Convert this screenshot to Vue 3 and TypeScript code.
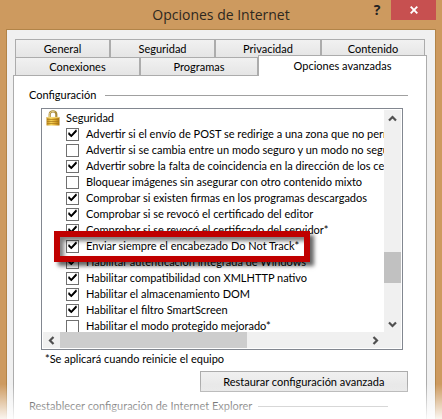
<script setup lang="ts">
import { ref } from 'vue'

interface Option {
  label: string
  checked: boolean
  highlighted?: boolean
}

const topTabs = ['General', 'Seguridad', 'Privacidad', 'Contenido']
const bottomTabs = ['Conexiones', 'Programas', 'Opciones avanzadas']
const active = ref('Opciones avanzadas')

const options = ref<Option[]>([
  { label: 'Advertir si el envío de POST se redirige a una zona que no perm', checked: true },
  { label: 'Advertir si se cambia entre un modo seguro y un modo no segu', checked: false },
  { label: 'Advertir sobre la falta de coincidencia en la dirección de los cert', checked: true },
  { label: 'Bloquear imágenes sin asegurar con otro contenido mixto', checked: false },
  { label: 'Comprobar si existen firmas en los programas descargados', checked: true },
  { label: 'Comprobar si se revocó el certificado del editor', checked: true },
  { label: 'Comprobar si se revocó el certificado del servidor*', checked: true },
  { label: 'Enviar siempre el encabezado Do Not Track*', checked: true, highlighted: true },
  { label: 'Habilitar autenticación integrada de Windows', checked: true },
  { label: 'Habilitar compatibilidad con XMLHTTP nativo', checked: true },
  { label: 'Habilitar el almacenamiento DOM', checked: true },
  { label: 'Habilitar el filtro SmartScreen', checked: true },
  { label: 'Habilitar el modo protegido mejorado*', checked: false },
])
</script>

<template>
  <main class="window">
    <header class="titlebar">
      <h1>Opciones de Internet</h1>
      <div class="window-buttons">
        <button type="button" class="help" aria-label="Ayuda">?</button>
        <button type="button" class="close" aria-label="Cerrar">
          <svg width="8" height="8" viewBox="0 0 8 8"><path d="M0.7 0.7 7.3 7.3M7.3 0.7 0.7 7.3" stroke="#fff" stroke-width="1.9" /></svg>
        </button>
      </div>
    </header>

    <div class="body">
      <nav class="tabs" role="tablist">
        <div class="tab-row top">
          <button v-for="t in topTabs" :key="t" type="button" role="tab" class="tab" :aria-selected="active === t">{{ t }}</button>
        </div>
        <div class="tab-row bottom">
          <button
            v-for="t in bottomTabs"
            :key="t"
            type="button"
            role="tab"
            class="tab"
            :class="{ active: active === t }"
            :aria-selected="active === t"
          >{{ t }}</button>
        </div>
      </nav>

      <section class="panel">
        <h2 class="legend">Configuración</h2>

        <div class="listbox">
          <div class="items">
            <div class="category">
              <svg width="14" height="16" viewBox="0 0 14 16">
                <defs>
                  <linearGradient id="brass" x1="0" x2="1" y1="0" y2="0">
                    <stop offset="0" stop-color="#c08a1c" />
                    <stop offset="0.35" stop-color="#f6d55c" />
                    <stop offset="0.65" stop-color="#e0ac30" />
                    <stop offset="1" stop-color="#a9720c" />
                  </linearGradient>
                </defs>
                <path d="M3.7 8V4.3a3.3 3 0 0 1 6.6 0V8" fill="none" stroke="#a98a3c" stroke-width="2.2" />
                <path d="M3.4 8V4.3a3.5 3.1 0 0 1 5.4-2.4" fill="none" stroke="#e6d38d" stroke-width="0.9" />
                <rect x="0.5" y="7" width="13" height="8.6" rx="0.6" fill="url(#brass)" />
                <path d="M1 9.5h12M1 11.5h12M1 13.5h12" stroke="#a87718" stroke-width="0.7" />
                <path d="M1 7.4h12" stroke="#f8e08a" stroke-width="0.8" />
              </svg>
              <span>Seguridad</span>
            </div>
            <label v-for="o in options" :key="o.label" class="option" :class="{ highlighted: o.highlighted }">
              <input v-model="o.checked" type="checkbox" />
              <svg v-if="o.checked" class="tick" width="13" height="13" viewBox="0 0 13 13"><path d="M3 5.6V7.2L5.3 9.4 10 4.4V2.8" fill="none" stroke="#000" stroke-width="1.3" /><path d="M3 6.4 5.3 8.7 10 3.6" fill="none" stroke="#000" stroke-width="1.6" /></svg>
              <span>{{ o.label }}</span>
            </label>
          </div>

          <div class="scroll vertical">
            <button type="button" aria-label="Subir">
              <svg width="9" height="7" viewBox="0 0 9 7"><path d="M1 5.5 4.5 2 8 5.5" fill="none" stroke="#505050" stroke-width="2.2" /></svg>
            </button>
            <div class="track"><div class="thumb"></div></div>
            <button type="button" aria-label="Bajar">
              <svg width="9" height="7" viewBox="0 0 9 7"><path d="M1 1.5 4.5 5 8 1.5" fill="none" stroke="#505050" stroke-width="2.2" /></svg>
            </button>
          </div>

          <div class="scroll horizontal">
            <button type="button" aria-label="Izquierda">
              <svg width="7" height="9" viewBox="0 0 7 9"><path d="M5.5 1 2 4.5 5.5 8" fill="none" stroke="#505050" stroke-width="2.2" /></svg>
            </button>
            <div class="track"><div class="thumb"></div></div>
            <button type="button" aria-label="Derecha">
              <svg width="7" height="9" viewBox="0 0 7 9"><path d="M1.5 1 5 4.5 1.5 8" fill="none" stroke="#505050" stroke-width="2.2" /></svg>
            </button>
          </div>
          <div class="corner"></div>
        </div>

        <p class="note">*Se aplicará cuando reinicie el equipo</p>
        <div class="actions">
          <button type="button" class="restore">Restaurar configuración avanzada</button>
        </div>
        <h2 class="legend faded">Restablecer configuración de Internet Explorer</h2>
      </section>
    </div>
    <div class="fade"></div>
  </main>
</template>

<style>
body {
  background: #fff;
}
</style>

<style scoped>
* {
  box-sizing: border-box;
}

.window {
  position: relative;
  padding: 0 6px;
  background: #cd9a5f;
  color: #000;
  font: 11px/16px Lato, "Liberation Sans", sans-serif;
}

button {
  margin: 0;
  padding: 0;
  border: 0;
  background: none;
  color: inherit;
  font: inherit;
}

.titlebar {
  position: relative;
  display: flex;
  justify-content: center;
  height: 29px;
}

h1 {
  margin: 0;
  color: #2e2820;
  font: 14px/30px "Open Sans", sans-serif;
}

.window-buttons {
  position: absolute;
  top: 0;
  right: 0;
  display: flex;
}

.help {
  width: 28px;
  height: 20px;
  color: #222;
  font: bold 14px/20px "Open Sans", sans-serif;
}

.close {
  display: grid;
  place-items: center;
  width: 45px;
  height: 20px;
  background: #c75050;
}

.body {
  padding: 9px 8px 0 6px;
  border: 1px solid #b28448;
  border-bottom: 0;
  background: #f0f0f0;
}

.tabs {
  padding: 0 2px;
}

.tab-row {
  display: grid;
}

.tab-row.top {
  grid-template-columns: 95fr 105fr 106fr 104fr;
}

.tab-row.bottom {
  grid-template-columns: 125fr 118fr 167fr;
}

.tab {
  height: 18px;
  border: 1px solid #acacac;
  border-bottom: 0;
  background: linear-gradient(#f1f1f1, #e5e5e5);
}

.tab.active {
  position: relative;
  z-index: 1;
  height: 21px;
  margin: -2px -2px -1px 0;
  background: #fff;
}

.panel {
  padding: 11px 18px 12px 15px;
  border: 1px solid #acacac;
  border-bottom: 0;
  background: #fff;
}

.legend {
  display: flex;
  align-items: center;
  gap: 9px;
  margin: 0;
  font: inherit;
}

.legend::after {
  content: "";
  flex: 1;
  height: 1px;
  background: #a0a0a0;
}

.listbox {
  display: grid;
  grid-template-columns: 1fr 17px;
  grid-template-rows: 222px 16px;
  margin: 5px 5px 0 12px;
  padding: 1px;
  border: 1px solid #828790;
}

.items {
  min-width: 0;
  overflow: hidden;
  padding-left: 3px;
}

.category {
  display: flex;
  gap: 6px;
}

.option {
  position: relative;
  display: flex;
  width: max-content;
  align-items: center;
  gap: 7px;
  height: 16px;
  padding-left: 20px;
  white-space: nowrap;
}

.option input {
  appearance: none;
  width: 13px;
  height: 13px;
  margin: 0;
  border: 1px solid #707070;
  background: #fff;
}

.tick {
  position: absolute;
  top: 1px;
  left: 20px;
  pointer-events: none;
}

.option.highlighted {
  z-index: 1;
}

.option.highlighted::after {
  content: "";
  position: absolute;
  inset: -7px -11px -8px 8px;
  border: 6px solid #c00000;
  box-shadow: 4px 4px 4px rgba(0, 0, 0, 0.6), inset 4px 4px 4px rgba(0, 0, 0, 0.5);
}

.scroll {
  display: flex;
  background: #f0f0f0;
}

.vertical {
  flex-direction: column;
}

.scroll button {
  display: grid;
  flex: none;
  place-items: center;
  width: 17px;
  height: 16px;
}

.track {
  display: flex;
  flex: 1;
}

.vertical .track {
  flex-direction: column;
  justify-content: flex-end;
  padding-bottom: 33px;
}

.thumb {
  background: #cdcdcd;
}

.vertical .thumb {
  height: 31px;
  background: #c1c1c1;
}

.horizontal .thumb {
  width: 61%;
}

.corner {
  background: #f0f0f0;
}

.note {
  margin: 1px 0 0 16px;
}

.actions {
  display: flex;
  justify-content: flex-end;
  margin-top: 4px;
}

.restore {
  width: 55%;
  height: 21px;
  border: 1px solid #acacac;
  background: linear-gradient(#f0f0f0, #e5e5e5);
}

.faded {
  margin: 6px 20px 0 0;
  gap: 6px;
}

.fade {
  position: absolute;
  right: 0;
  bottom: 0;
  left: 0;
  height: 42px;
  background: linear-gradient(rgba(255, 255, 255, 0), #fff 92%);
  pointer-events: none;
}
</style>
